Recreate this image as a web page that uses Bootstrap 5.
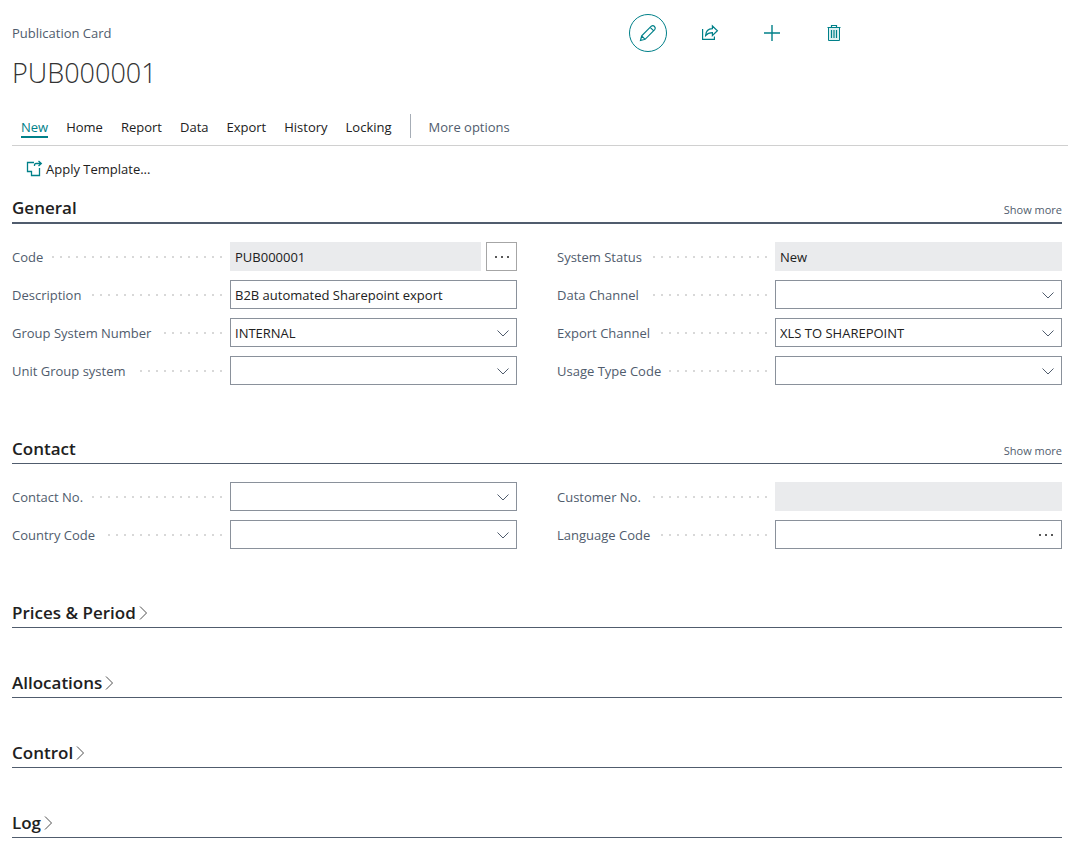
<!DOCTYPE html>
<html lang="en">
<head>
<meta charset="utf-8">
<meta name="viewport" content="width=device-width, initial-scale=1">
<title>Publication Card - PUB000001</title>
<link href="https://cdn.jsdelivr.net/npm/bootstrap@5.3.0/dist/css/bootstrap.min.css" rel="stylesheet">
<style>
  :root { --teal: #008089; --slate: #505c6d; --ink: #212121; --edge: #8a919b; }
  body { font-family: "Open Sans", "Noto Sans", sans-serif; font-size: 13px; line-height: 20px; color: var(--ink); background: #fff; }
  .page { padding: 14px 0 16px 12px; }
  .caption { color: var(--slate); }
  .page-title { font-size: 27px; font-weight: 300; line-height: 36px; margin: 3px 0 0; color: #333; }
  .tool { width: 38px; height: 38px; color: var(--teal); border: 1px solid transparent; border-radius: 50%; padding: 0; display: flex; align-items: center; justify-content: center; }
  .tool.current { border-color: var(--teal); }
  .tool:hover { color: var(--teal); border-color: var(--teal); }
  .tools { gap: 24px; padding-left: 1px; }
  .menu-bar { margin-top: 19px; padding: 4px 0 7px 9px; gap: 18px; border-bottom: 1px solid #d0d0d0; }
  .menu-bar .nav-link { padding: 4px 0 0; color: var(--ink); border-bottom: 2px solid transparent; line-height: 18px; }
  .menu-bar .nav-link.active { color: var(--teal); border-color: var(--teal); }
  .menu-bar .nav-link.more { color: var(--slate); }
  .divider { width: 1px; height: 24px; background: #a6adb6; }
  .command { border: 0; padding: 0; margin: 13px 0 7px 14px; gap: 3px; font-size: 13px; line-height: 20px; color: var(--ink); }
  .sheet { padding-right: 6px; }
  .fast-tab { margin-bottom: 32px; }
  .fast-head { height: 38px; padding-bottom: 4px; border-bottom: 1px solid var(--slate); }
  .fast-head.focused { border-bottom-width: 2px; }
  .fast-head h2 { font-size: 17px; font-weight: 600; line-height: 20px; margin: 0; }
  .fast-head button { border: 0; background: none; padding: 0; color: inherit; font: inherit; display: flex; align-items: center; gap: 3px; }
  .show-more { font-size: 11px; line-height: 16px; color: var(--slate); text-decoration: none; }
  .fields { display: grid; grid-template-columns: 1fr 1fr; column-gap: 40px; padding-top: 18px; }
  .field { display: flex; align-items: center; min-height: 29px; margin-bottom: 9px; }
  .field-name { flex: 0 0 218px; display: flex; align-items: center; color: var(--slate); padding-right: 8px; gap: 8px; }
  .field-name::after { content: ""; flex: 1; height: 2px; margin-top: 1px; background: repeating-linear-gradient(to left, #d8d8d8 0 2px, transparent 2px 8px); }
  .field .form-control, .field .form-select { min-width: 0; flex: 1; height: 29px; padding: 0 4px; font-size: 13px; line-height: 20px; border: 1px solid var(--edge); border-radius: 0; color: var(--ink); }
  .field .form-select { padding-right: 28px; background-position: right 6px center; background-size: 14px 14px;
    background-image: url("data:image/svg+xml,%3Csvg xmlns='http://www.w3.org/2000/svg' viewBox='0 0 14 14' fill='none' stroke='%23505c6d'%3E%3Cpath d='M1.5 4.5 7 10l5.500-5.500'/%3E%3C/svg%3E"); }
  .field .form-control[readonly] { background: #eaebed; border-color: #eaebed; }
  .assist { flex: none; width: 31px; height: 29px; margin-left: 5px; padding: 0; border: 1px solid #a6a6a6; border-radius: 0; display: flex; align-items: center; justify-content: center; }
  .field .input-group { flex: 1; border: 1px solid var(--edge); height: 29px; flex-wrap: nowrap; }
  .field .input-group .form-control { border: 0; height: 27px; }
  .field .input-group .assist { border: 0; height: 27px; margin: 0; width: 30px; }
</style>
</head>
<body>
<div class="container-fluid page">
  <header>
    <div class="row g-0 align-items-center">
      <div class="col-7 caption">Publication Card</div>
      <div class="col-5 d-flex tools">
        <button class="btn tool current" type="button" aria-label="Edit"><svg width="18" height="18" viewBox="0 0 18 18" fill="none" stroke="currentColor" stroke-width="1.200"><path d="M1.500 16.500l1.200-4.700L12.300 2.200q1.700-1.300 3.200.3t.2 3.200L6.100 15.300zM2.700 11.800l3.400 3.500M11.200 3.300l3.500 3.500"/></svg></button>
        <button class="btn tool" type="button" aria-label="Share"><svg width="18" height="18" viewBox="0 0 18 18" fill="none" stroke="currentColor" stroke-width="1.200"><path d="M1.600 5v10.400h11.800v-2.900M4.600 11.600c.2-4.800 2.700-6.900 6.800-7V2l5 4.800-5 4.700V8.700c-3.200 0-5 .7-6.800 2.900z"/></svg></button>
        <button class="btn tool" type="button" aria-label="New"><svg width="18" height="18" viewBox="0 0 18 18" fill="none" stroke="currentColor" stroke-width="1.400"><path d="M9 1v16M1 9h16"/></svg></button>
        <button class="btn tool" type="button" aria-label="Delete"><svg width="16" height="18" viewBox="0 0 16 18" fill="none" stroke="currentColor"><path d="M2.500 3.500h11v13h-11z" fill="#dff0f1"/><path d="M1.500 3.500h13M5.500 3.500v-2h5v2M5.500 6v8M8 6v8M10.500 6v8" stroke-width="1.200"/></svg></button>
      </div>
    </div>
    <h1 class="page-title">PUB000001</h1>
  </header>

  <nav class="nav menu-bar align-items-center" aria-label="Actions">
    <a class="nav-link active" href="#">New</a>
    <a class="nav-link" href="#">Home</a>
    <a class="nav-link" href="#">Report</a>
    <a class="nav-link" href="#">Data</a>
    <a class="nav-link" href="#">Export</a>
    <a class="nav-link" href="#">History</a>
    <a class="nav-link" href="#">Locking</a>
    <span class="divider"></span>
    <a class="nav-link more" href="#">More options</a>
  </nav>
  <button class="btn command d-flex align-items-center" type="button"><svg width="17" height="18" viewBox="0 0 17 18" fill="none" stroke="#008089" stroke-width="1.300"><path d="M8 2.500H1.500v9h4v4h8V8M8.500 6V5q0-1.500 1.500-1.500h5M12.500 1l2.800 2.500L12.500 6"/></svg>Apply Template...</button>

  <main class="sheet">
    <section class="fast-tab">
      <div class="fast-head focused d-flex align-items-end justify-content-between">
        <h2>General</h2><a class="show-more" href="#">Show more</a>
      </div>
      <div class="fields">
        <div class="field"><label class="field-name" for="code">Code</label><input class="form-control" id="code" value="PUB000001" readonly><button class="btn assist" type="button" aria-label="Choose code"><svg width="16" height="4" viewBox="0 0 16 4" fill="#212121"><circle cx="2" cy="2" r="1"/><circle cx="8" cy="2" r="1"/><circle cx="14" cy="2" r="1"/></svg></button></div>
        <div class="field"><label class="field-name" for="status">System Status</label><input class="form-control" id="status" value="New" readonly></div>
        <div class="field"><label class="field-name" for="descr">Description</label><input class="form-control" id="descr" value="B2B automated Sharepoint export"></div>
        <div class="field"><label class="field-name" for="data">Data Channel</label><select class="form-select" id="data"><option></option></select></div>
        <div class="field"><label class="field-name" for="group">Group System Number</label><select class="form-select" id="group"><option>INTERNAL</option></select></div>
        <div class="field"><label class="field-name" for="export">Export Channel</label><select class="form-select" id="export"><option>XLS TO SHAREPOINT</option></select></div>
        <div class="field"><label class="field-name" for="unit">Unit Group system</label><select class="form-select" id="unit"><option></option></select></div>
        <div class="field"><label class="field-name" for="usage">Usage Type Code</label><select class="form-select" id="usage"><option></option></select></div>
      </div>
    </section>

    <section class="fast-tab">
      <div class="fast-head d-flex align-items-end justify-content-between">
        <h2>Contact</h2><a class="show-more" href="#">Show more</a>
      </div>
      <div class="fields">
        <div class="field"><label class="field-name" for="contact">Contact No.</label><select class="form-select" id="contact"><option></option></select></div>
        <div class="field"><label class="field-name" for="customer">Customer No.</label><input class="form-control" id="customer" readonly></div>
        <div class="field"><label class="field-name" for="country">Country Code</label><select class="form-select" id="country"><option></option></select></div>
        <div class="field"><label class="field-name" for="language">Language Code</label><div class="input-group"><input class="form-control" id="language"><button class="btn assist" type="button" aria-label="Choose language"><svg width="16" height="4" viewBox="0 0 16 4" fill="#212121"><circle cx="2" cy="2" r="1"/><circle cx="8" cy="2" r="1"/><circle cx="14" cy="2" r="1"/></svg></button></div></div>
      </div>
    </section>

    <section class="fast-tab"><div class="fast-head d-flex align-items-end"><h2><button type="button" aria-expanded="false">Prices &amp; Period<svg width="9" height="16" viewBox="0 0 9 16" fill="none" stroke="#505050"><path d="M1 1.500 7.500 8 1 14.500"/></svg></button></h2></div></section>
    <section class="fast-tab"><div class="fast-head d-flex align-items-end"><h2><button type="button" aria-expanded="false">Allocations<svg width="9" height="16" viewBox="0 0 9 16" fill="none" stroke="#505050"><path d="M1 1.500 7.500 8 1 14.500"/></svg></button></h2></div></section>
    <section class="fast-tab"><div class="fast-head d-flex align-items-end"><h2><button type="button" aria-expanded="false">Control<svg width="9" height="16" viewBox="0 0 9 16" fill="none" stroke="#505050"><path d="M1 1.500 7.500 8 1 14.500"/></svg></button></h2></div></section>
    <section class="fast-tab mb-0"><div class="fast-head d-flex align-items-end"><h2><button type="button" aria-expanded="false">Log<svg width="9" height="16" viewBox="0 0 9 16" fill="none" stroke="#505050"><path d="M1 1.500 7.500 8 1 14.500"/></svg></button></h2></div></section>
  </main>
</div>
<script src="https://cdn.jsdelivr.net/npm/bootstrap@5.3.0/dist/js/bootstrap.bundle.min.js"></script>
</body>
</html>
